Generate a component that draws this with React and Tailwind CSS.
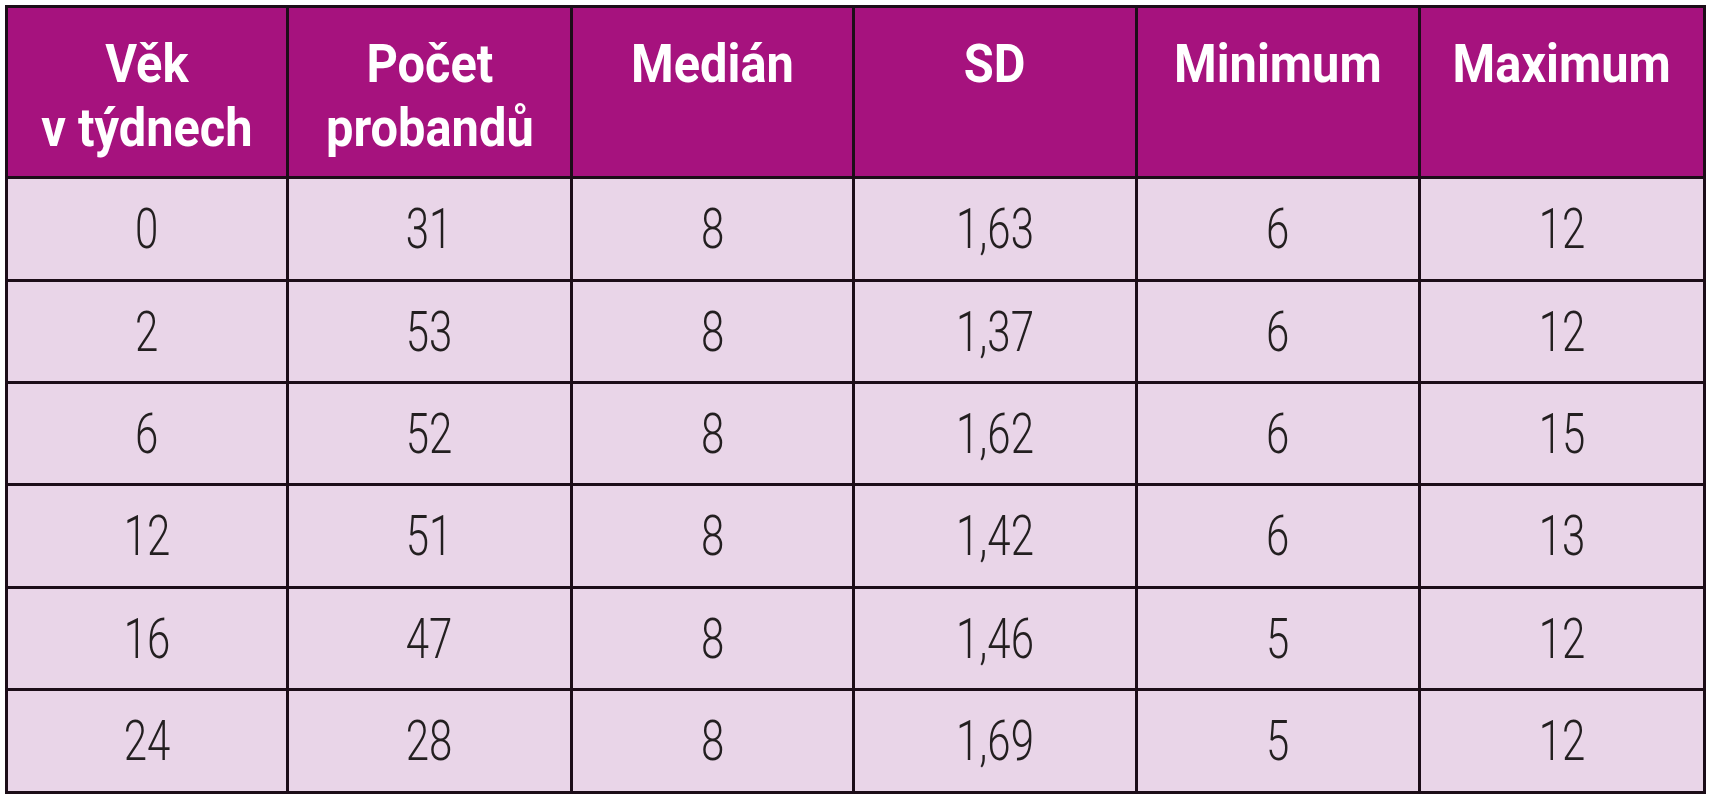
import React from "react";

const headers = [
  ["Věk", "v týdnech"],
  ["Počet", "probandů"],
  ["Medián"],
  ["SD"],
  ["Minimum"],
  ["Maximum"],
];

const rows = [
  ["0", "31", "8", "1,63", "6", "12"],
  ["2", "53", "8", "1,37", "6", "12"],
  ["6", "52", "8", "1,62", "6", "15"],
  ["12", "51", "8", "1,42", "6", "13"],
  ["16", "47", "8", "1,46", "5", "12"],
  ["24", "28", "8", "1,69", "5", "12"],
];

const App = () => {
  return (
    <div className="w-[1725px] h-[800px] bg-white pt-[5px] pl-[5px]" style={{ fontFamily: "Roboto, 'Liberation Sans', sans-serif" }}>
      <div className="inline-grid grid-cols-[278px_281px_279px_280px_280px_282px] grid-rows-[168px_100px_99px_99px_100px_99px_100px] gap-[3px] p-[3px] bg-[#1c0d18]">
        {headers.map((lines, i) => (
          <div key={"h" + i} className="bg-[#a6127e] text-white font-bold text-center pt-[24px]">
            <span className="inline-block scale-x-[0.92] text-[53px] leading-[64px]">
              {lines.map((l, j) => (
                <div key={j}>{l}</div>
              ))}
            </span>
          </div>
        ))}
        {rows.map((row, r) =>
          row.map((cell, c) => (
            <div key={r + "-" + c} className="bg-[#e9d5e8] text-[#231f20] flex items-center justify-center">
              <span className="inline-block scale-x-[0.75] text-[56px] font-light leading-none">{cell}</span>
            </div>
          ))
        )}
      </div>
    </div>
  );
};

export default App;
